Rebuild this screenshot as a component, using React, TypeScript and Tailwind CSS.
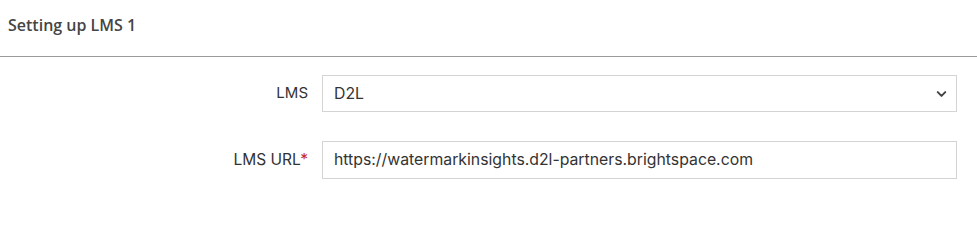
import { ChevronDown } from 'lucide-react';

const App = () => {
  return (
    <div className="min-h-screen bg-white font-['Inter',sans-serif]">
      {/* Header */}
      <div className="h-[57px] border-b border-[#9a9a9a] pl-2 flex items-center">
        <h2 className="text-[16px] font-semibold text-[#454545] font-['Open_Sans',sans-serif] pb-[6px]">
          Setting up LMS 1
        </h2>
      </div>

      {/* Form */}
      <div className="pt-[18px] pr-5 flex flex-col gap-[29px]">
        <div className="flex items-center">
          <label className="w-[308px] text-right text-[15px] text-[#333]">LMS</label>
          <div className="ml-[14px] flex-1 relative">
            <div className="h-[37px] border border-[#d4d4d4] flex items-center pl-[11px] text-[15.8px] text-[#333]">
              D2L
            </div>
            <ChevronDown className="absolute right-[8px] top-1/2 -translate-y-1/2 h-[15px] w-[15px] text-[#444]" strokeWidth={3.2} />
          </div>
        </div>

        <div className="flex items-center">
          <label className="w-[308px] text-right text-[15.5px] text-[#333]">
            LMS URL<span className="text-[#c62828]">*</span>
          </label>
          <div className="ml-[14px] flex-1">
            <div className="h-[38px] border border-[#d4d4d4] flex items-center pl-[11px] text-[15.8px] text-[#333]">
              https://watermarkinsights.d2l-partners.brightspace.com
            </div>
          </div>
        </div>
      </div>
    </div>
  );
};

export default App;
